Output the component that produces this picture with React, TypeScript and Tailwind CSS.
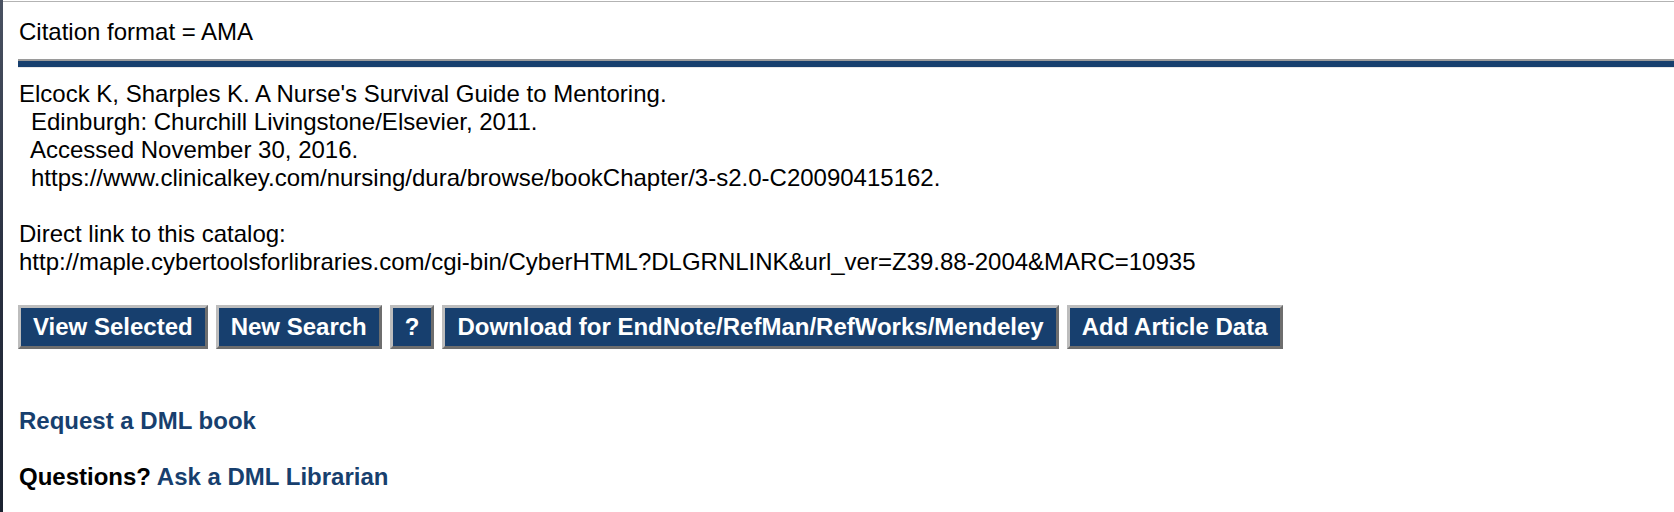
import React from "react";

const buttons = [
  "View Selected",
  "New Search",
  "?",
  "Download for EndNote/RefMan/RefWorks/Mendeley",
  "Add Article Data",
];

const NavButton = ({ label }: { label: string }) => (
  <button className="h-[44px] px-[12px] bg-[#173f6e] text-white font-bold text-[24px] leading-none border-[3px] border-t-[#bdbdbd] border-l-[#bdbdbd] border-b-[#6e6e6e] border-r-[#6e6e6e]">
    {label}
  </button>
);

const App = () => {
  return (
    <div className="flex h-[512px] bg-white text-black font-['Liberation_Sans',Arial,sans-serif] overflow-hidden">
      {/* dark window edge */}
      <div className="w-[3px] shrink-0 bg-gradient-to-b from-[#4a5262] via-[#2a3142] to-[#1b2230]" />

      <div className="flex-1 mt-px border-t border-[#b3b3b3]">
        {/* Header */}
        <div className="pl-[16px] pt-[16px] text-[24px] leading-[28px]">Citation format = AMA</div>

        {/* Rule */}
        <div className="ml-[15px] mt-[13px] border-t-2 border-[#9a9a9a] border-b border-b-[#e8e8e8]">
          <div className="h-[6px] bg-[#173f6e]" />
        </div>

        {/* Citation */}
        <div className="pl-[16px] pt-[12px] text-[24px] leading-[28px]">
          <div>Elcock K, Sharples K. A Nurse's Survival Guide to Mentoring.</div>
          <div className="pl-[12px]">Edinburgh: Churchill Livingstone/Elsevier, 2011.</div>
          <div className="pl-[11px]">Accessed November 30, 2016.</div>
          <div className="pl-[12px]">https://www.clinicalkey.com/nursing/dura/browse/bookChapter/3-s2.0-C20090415162.</div>

          <div className="mt-[28px]">Direct link to this catalog:</div>
          <div>http://maple.cybertoolsforlibraries.com/cgi-bin/CyberHTML?DLGRNLINK&amp;url_ver=Z39.88-2004&amp;MARC=10935</div>
        </div>

        {/* Actions */}
        <div className="flex gap-[8px] pl-[15px] mt-[29px]">
          {buttons.map((b) => (
            <NavButton key={b} label={b} />
          ))}
        </div>

        {/* Links */}
        <div className="pl-[16px] mt-[58px] text-[24px] leading-[28px] font-bold">
          <a href="#" className="text-[#173f6e]">Request a DML book</a>
        </div>
        <div className="pl-[16px] mt-[28px] text-[24px] leading-[28px] font-bold">
          Questions? <a href="#" className="text-[#173f6e]">Ask a DML Librarian</a>
        </div>
      </div>
    </div>
  );
};

export default App;
